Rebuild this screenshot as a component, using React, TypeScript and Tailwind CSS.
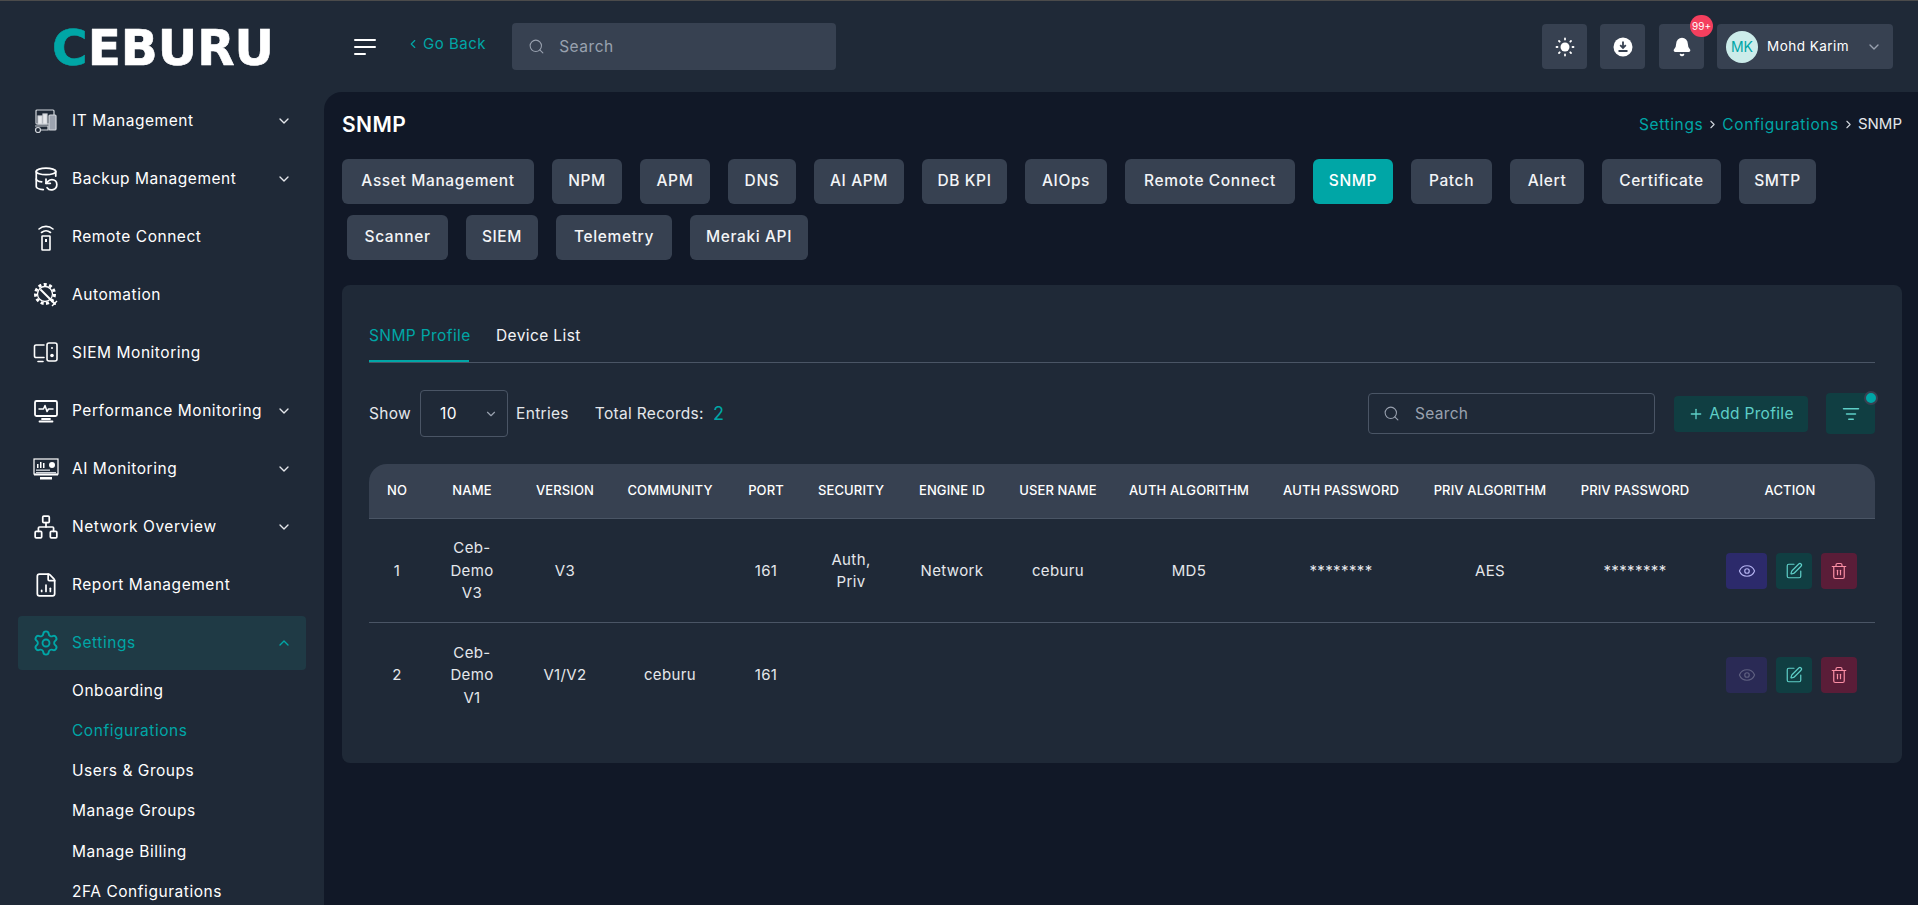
import { ChevronDown, ChevronUp, ChevronLeft, ChevronRight, Search, Plus, Eye, SquarePen, Trash2, ListFilter, Bell, DatabaseBackup, Network, FileChartColumn, Settings } from "lucide-react"
import type { ReactNode } from "react"

const ItIcon = () => (
    <svg width="26" height="26" viewBox="0 0 26 26" fill="none" stroke="#d1d5db" strokeWidth="1.2">
        <rect x="3" y="2" width="18" height="14" rx="1" />
        <rect x="5" y="8" width="4" height="8" fill="#e5e7eb" />
        <rect x="10" y="6" width="4" height="10" fill="#e5e7eb" />
        <rect x="16" y="7" width="7" height="15" rx="1" fill="#9ca3af" />
        <path d="M2 18h13v4H8" />
        <circle cx="5" cy="22" r="2.5" />
    </svg>
)

const RemoteIcon = () => (
    <svg width="26" height="27" viewBox="0 0 26 27" fill="none" stroke="#fff" strokeWidth="1.6" strokeLinecap="round">
        <path d="M6 5c4-3.5 10-3.5 14 0" />
        <path d="M8.5 8.5c2.800-2.200 6.200-2.200 9 0" />
        <rect x="9" y="12" width="8" height="14" rx="0.5" />
        <rect x="12" y="15" width="2" height="3" fill="#fff" stroke="none" />
    </svg>
)

const AutomationIcon = () => (
    <svg width="26" height="26" viewBox="0 0 26 26" fill="none" stroke="#fff" strokeWidth="1.7">
        <circle cx="12" cy="12" r="9.500" strokeDasharray="3 2.400" strokeWidth="3" />
        <circle cx="12" cy="12" r="7.500" strokeWidth="1.300" />
        <path d="M8 8l3 3 2 2 9 9" strokeWidth="2" strokeLinecap="round" />
        <path d="M24 19l-5 5" strokeWidth="1.400" />
    </svg>
)

const SiemIcon = () => (
    <svg width="26" height="22" viewBox="0 0 26 22" fill="none" stroke="#fff" strokeWidth="1.6" strokeLinecap="round">
        <path d="M11 3H3a1.500 1.500 0 0 0-1.500 1.500V14A1.500 1.500 0 0 0 3 15.500h8" />
        <path d="M5 19.500h5" />
        <rect x="14" y="1" width="10" height="18" rx="2" />
        <circle cx="19" cy="6" r="1" fill="#fff" stroke="none" />
        <circle cx="19" cy="13.500" r="1.800" fill="#fff" stroke="none" />
    </svg>
)

const PerformanceIcon = () => (
    <svg width="26" height="24" viewBox="0 0 26 24" fill="none" stroke="#fff" strokeWidth="1.8" strokeLinecap="round" strokeLinejoin="round">
        <rect x="2" y="2" width="22" height="15" rx="1.500" />
        <path d="M6 10h4.500l1.500-3.500 2 6 1.500-2.500H20" strokeWidth="1.500" />
        <path d="M9 20h8M6.500 22.500h13" />
    </svg>
)

const AiIcon = () => (
    <svg width="26" height="22" viewBox="0 0 26 22" fill="none">
        <rect x="1" y="1" width="24" height="15" fill="none" stroke="#fff" strokeWidth="1.200" />
        <rect x="4" y="6" width="1.500" height="4" fill="#fff" />
        <rect x="7" y="4" width="1.500" height="6" fill="#fff" />
        <rect x="10" y="5" width="1.500" height="5" fill="#fff" />
        <circle cx="19" cy="7" r="3" fill="#fff" />
        <rect x="3" y="11.500" width="14" height="1.300" fill="#d1d5db" />
        <rect x="3" y="14" width="20" height="1.300" fill="#d1d5db" />
        <rect x="1" y="16" width="24" height="1.500" fill="#fff" />
        <rect x="7" y="19" width="12" height="2.500" fill="#fff" />
    </svg>
)

const SunIcon = () => (
    <svg width="20" height="20" viewBox="0 0 20 20" fill="#fff" stroke="#fff" strokeWidth="1.800" strokeLinecap="round">
        <circle cx="10" cy="10" r="4.500" stroke="none" />
        <path d="M10 1.500v1M10 17.500v1M1.500 10h1M17.500 10h1M4 4l.7.7M15.300 15.300l.7.7M4 16l.7-.7M15.300 4.700l.7-.7" />
    </svg>
)

const DownloadIcon = () => (
    <svg width="20" height="20" viewBox="0 0 20 20">
        <circle cx="10" cy="10" r="9.500" fill="#fff" />
        <path d="M10 4.500v6M7.200 8.200L10 11l2.800-2.800M5.500 14h9" stroke="#374151" strokeWidth="1.800" fill="none" />
    </svg>
)

const MenuIcon = () => (
    <svg width="22" height="18" viewBox="0 0 22 18" fill="none" stroke="#fff" strokeWidth="2" strokeLinecap="round">
        <path d="M1 2h20M1 9h20M1 16h10" />
    </svg>
)

type NavItem = { label: string; icon: ReactNode; caret?: boolean }

const navItems: NavItem[] = [
    { label: "IT Management", icon: <ItIcon />, caret: true },
    { label: "Backup Management", icon: <DatabaseBackup size={26} strokeWidth={1.6} />, caret: true },
    { label: "Remote Connect", icon: <RemoteIcon /> },
    { label: "Automation", icon: <AutomationIcon /> },
    { label: "SIEM Monitoring", icon: <SiemIcon /> },
    { label: "Performance Monitoring", icon: <PerformanceIcon />, caret: true },
    { label: "AI Monitoring", icon: <AiIcon />, caret: true },
    { label: "Network Overview", icon: <Network size={26} strokeWidth={1.6} />, caret: true },
    { label: "Report Management", icon: <FileChartColumn size={26} strokeWidth={1.6} /> },
]

const subItems = ["Onboarding", "Configurations", "Users & Groups", "Manage Groups", "Manage Billing", "2FA Configurations"]

const configTabs = [
    { label: "Asset Management", w: "w-[192px]" },
    { label: "NPM", w: "w-[70px]" },
    { label: "APM", w: "w-[70px]" },
    { label: "DNS", w: "w-[68px]" },
    { label: "AI APM", w: "w-[90px]" },
    { label: "DB KPI", w: "w-[85px]" },
    { label: "AIOps", w: "w-[82px]" },
    { label: "Remote Connect", w: "w-[170px]" },
    { label: "SNMP", w: "w-[80px]" },
    { label: "Patch", w: "w-[81px]" },
    { label: "Alert", w: "w-[74px]" },
    { label: "Certificate", w: "w-[119px]" },
    { label: "SMTP", w: "w-[77px]" },
    { label: "Scanner", w: "w-[101px] ml-[5px]" },
    { label: "SIEM", w: "w-[72px]" },
    { label: "Telemetry", w: "w-[116px]" },
    { label: "Meraki API", w: "w-[118px]" },
]

const columns = [
    { label: "NO", w: "w-[56px]" },
    { label: "NAME", w: "w-[94px]" },
    { label: "VERSION", w: "w-[92px]" },
    { label: "COMMUNITY", w: "w-[118px]" },
    { label: "PORT", w: "w-[74px]" },
    { label: "SECURITY", w: "w-[96px]" },
    { label: "ENGINE ID", w: "w-[106px]" },
    { label: "USER NAME", w: "w-[106px]" },
    { label: "AUTH ALGORITHM", w: "w-[156px]" },
    { label: "AUTH PASSWORD", w: "w-[148px]" },
    { label: "PRIV ALGORITHM", w: "w-[150px]" },
    { label: "PRIV PASSWORD", w: "w-[140px]" },
    { label: "ACTION", w: "w-[170px]" },
]

const rows = [
    { no: "1", cells: ["Ceb-Demo V3", "V3", "", "161", "Auth, Priv", "Network", "ceburu", "MD5", "********", "AES", "********"], canView: true },
    { no: "2", cells: ["Ceb-Demo V1", "V1/V2", "ceburu", "161", "", "", "", "", "", "", ""], canView: false },
]

const Sidebar = () => {
    return (
        <aside className="w-[324px] shrink-0 h-full overflow-hidden">
            {/* Logo */}
            <div className="h-[91px] pl-[52px] pt-[14px]">
                <svg width="240" height="64" viewBox="0 0 240 64">
                    <text x="0" y="50" textLength="222" lengthAdjust="spacingAndGlyphs" fontFamily="'DejaVu Sans', sans-serif" fontWeight="700" fontSize="49" fill="#fff" stroke="#fff" strokeWidth="0.6">
                        <tspan fill="#00a6a6" stroke="#00a6a6">C</tspan>EBURU
                    </text>
                </svg>
            </div>

            <nav className="px-[18px] pt-[2px]">
                {navItems.map((item) => (
                    <div key={item.label} className="h-[54px] mb-1 flex items-center text-white">
                        <span className="w-[54px] pl-[15px] flex items-center shrink-0">{item.icon}</span>
                        <span className="text-[15.500px] font-normal tracking-[0.035em] whitespace-nowrap">{item.label}</span>
                        {item.caret && <ChevronDown size={16} className="ml-auto mr-[14px] shrink-0 text-gray-200" />}
                    </div>
                ))}

                {/* Settings, open */}
                <div className="h-[54px] flex items-center rounded bg-[#1f3a45] text-[#00a6a6]">
                    <span className="w-[54px] pl-[14px] shrink-0"><Settings size={28} strokeWidth={1.6} /></span>
                    <span className="text-[15.500px] font-normal tracking-[0.035em]">Settings</span>
                    <ChevronUp size={16} className="ml-auto mr-[14px]" />
                </div>
                {subItems.map((sub) => (
                    <div key={sub} className={`h-[40.300px] pl-[54px] flex items-center text-[15.500px] font-normal tracking-[0.035em] ${sub === "Configurations" ? "text-[#00a6a6]" : "text-white"}`}>
                        {sub}
                    </div>
                ))}
            </nav>
        </aside>
    )
}

const TopBar = () => {
    return (
        <header className="h-[91px] shrink-0 flex items-start">
            <span className="ml-[30px] mt-[37px]"><MenuIcon /></span>
            <a className="ml-[30px] mt-[32px] flex items-center text-[15px] tracking-[0.035em] text-[#00a6a6]">
                <ChevronLeft size={14} className="mr-[3px]" />Go Back
            </a>
            <div className="ml-[26px] mt-[22px] w-[324px] h-[47px] rounded bg-[#374151] flex items-center pl-4 text-gray-400">
                <Search size={17} strokeWidth={1.500} />
                <span className="ml-[14px] text-[15.500px] tracking-[0.035em]">Search</span>
            </div>

            <div className="ml-auto mr-[25px] mt-[23px] flex items-center">
                <button className="w-[45px] h-[45px] rounded bg-[#374151] flex items-center justify-center"><SunIcon /></button>
                <button className="ml-[13px] w-[45px] h-[45px] rounded bg-[#374151] flex items-center justify-center"><DownloadIcon /></button>
                <button className="relative ml-[14px] w-[45px] h-[45px] rounded bg-[#374151] flex items-center justify-center">
                    <Bell size={20} fill="#fff" className="text-white" />
                    <span className="absolute left-[31px] top-[-9px] w-[23px] h-[22px] rounded-full bg-[#f43f5e] text-white text-[10px] flex items-center justify-center">99+</span>
                </button>
                <div className="ml-[13px] w-[176px] h-[45px] rounded bg-[#374151] flex items-center pl-[9px]">
                    <span className="w-8 h-8 rounded-full bg-[#ccecea] text-[#00a6a6] text-sm flex items-center justify-center">MK</span>
                    <span className="ml-[9px] text-[13.500px] font-normal tracking-[0.035em] text-white whitespace-nowrap">Mohd Karim</span>
                    <ChevronDown size={16} className="ml-auto mr-[11px] text-gray-400" />
                </div>
            </div>
        </header>
    )
}

const Toolbar = () => {
    return (
        <div className="mt-[27px] h-[47px] flex items-center text-[15.500px] tracking-[0.02em] text-gray-200">
            <span>Show</span>
            <div className="ml-[9px] w-[88px] h-[47px] rounded border border-gray-600 flex items-center pl-[19px] pr-[9px] text-white">
                10<ChevronDown size={14} className="ml-auto text-gray-400" />
            </div>
            <span className="ml-[8px]">Entries</span>
            <span className="ml-[26px]">Total Records:</span>
            <span className="ml-[9px] text-lg text-[#00a6a6]">2</span>

            <div className="ml-auto w-[287px] h-[41px] rounded border border-gray-600 flex items-center pl-[14px] text-gray-400">
                <Search size={17} strokeWidth={1.500} />
                <span className="ml-[15px]">Search</span>
            </div>
            <button className="ml-[19px] w-[134px] h-[36px] rounded bg-[#103e42] text-[#5ecfc8] flex items-center justify-center">
                <Plus size={16} className="mr-[5px]" />Add Profile
            </button>
            <button className="relative ml-[18px] w-[49px] h-[41px] rounded bg-[#103e42] text-[#5ecfc8] flex items-center justify-center">
                <ListFilter size={18} />
                <span className="absolute right-[-3px] top-[-2px] w-[14px] h-[14px] rounded-full bg-[#00a6a6] border-2 border-[#374151]" />
            </button>
        </div>
    )
}

const SnmpTable = () => {
    return (
        <table className="mt-[27px] w-full table-fixed border-collapse">
            <colgroup>
                {columns.map((col) => <col key={col.label} className={col.w} />)}
            </colgroup>
            <thead>
                <tr className="h-[54px] bg-[#374151] border-b border-gray-600">
                    {columns.map((col, i) => (
                        <th
                            key={col.label}
                            className={`text-[13px] font-medium tracking-[0.01em] text-white whitespace-nowrap ${i === 0 ? "rounded-tl-[18px]" : ""} ${i === columns.length - 1 ? "rounded-tr-[18px]" : ""}`}
                        >
                            {col.label}
                        </th>
                    ))}
                </tr>
            </thead>
            <tbody>
                {rows.map((row) => (
                    <tr key={row.no} className="h-[104px] border-b border-gray-600 last:border-b-0 text-[15px] leading-[22.500px] tracking-[0.025em] text-gray-200 text-center [&>td]:pt-[2px]">
                        <td>{row.no}</td>
                        {row.cells.map((cell, i) => (
                            <td key={i} className={i === 0 || i === 4 ? "px-[19px]" : ""}>{cell}</td>
                        ))}
                        <td>
                            <div className="flex items-center justify-center gap-[9px] pl-[3px]">
                                <button className={`w-[41px] h-[36px] rounded flex items-center justify-center ${row.canView ? "bg-[#2c2a6b] text-[#b4b2f0]" : "bg-[#2a2a55] text-[#5f6080]"}`}>
                                    <Eye size={18} strokeWidth={1.600} />
                                </button>
                                <button className="w-[36px] h-[36px] rounded bg-[#103e42] text-[#5ecfc8] flex items-center justify-center">
                                    <SquarePen size={18} strokeWidth={1.600} />
                                </button>
                                <button className="w-[36px] h-[36px] rounded bg-[#5a1d38] text-[#fb8fa5] flex items-center justify-center">
                                    <Trash2 size={18} strokeWidth={1.600} />
                                </button>
                            </div>
                        </td>
                    </tr>
                ))}
            </tbody>
        </table>
    )
}

const App = () => {
    return (
        <div className="h-screen overflow-hidden flex bg-[#1f2937] border-t border-[#4b4b4b] font-[family-name:Inter,sans-serif]">
            <Sidebar />
            <div className="flex-1 min-w-0 flex flex-col">
                <TopBar />
                <main className="flex-1 rounded-tl-[18px] bg-[#111827] pl-[18px] pr-[16px]">
                    {/* Title and breadcrumb */}
                    <div className="mt-[10px] h-[45px] flex items-center justify-between">
                        <h1 className="text-[21px] font-semibold text-white tracking-[0.02em]">SNMP</h1>
                        <div className="flex items-center text-[15.500px] font-normal tracking-[0.04em] text-[#00a6a6]">
                            Settings<ChevronRight size={13} className="mx-[3px] text-gray-300" />Configurations<ChevronRight size={13} className="mx-[3px] text-gray-300" /><span className="text-gray-200 tracking-normal text-[15px]">SNMP</span>
                        </div>
                    </div>

                    {/* Config tabs */}
                    <div className="mt-[12px] flex flex-wrap gap-x-[18px] gap-y-[11px]">
                        {configTabs.map((tab) => (
                            <button
                                key={tab.label}
                                className={`${tab.w} h-[45px] pb-[2px] rounded-md text-[15.500px] font-medium tracking-[0.04em] whitespace-nowrap ${tab.label === "SNMP" ? "bg-[#00a6a6] text-white" : "bg-[#374151] text-gray-100"}`}
                            >
                                {tab.label}
                            </button>
                        ))}
                    </div>

                    {/* Card */}
                    <section className="mt-[25px] h-[478px] rounded-lg bg-[#1f2937] px-[27px] pt-[31px]">
                        <div className="h-[47px] flex border-b border-gray-600 text-[15.500px] font-normal tracking-[0.025em]">
                            <span className="w-[100px] h-[46px] pt-[8px] whitespace-nowrap border-b-2 border-[#00a6a6] text-[#00a6a6]">SNMP Profile</span>
                            <span className="ml-[27px] pt-[8px] text-gray-100">Device List</span>
                        </div>
                        <Toolbar />
                        <SnmpTable />
                    </section>
                </main>
            </div>
        </div>
    )
}

export default App
